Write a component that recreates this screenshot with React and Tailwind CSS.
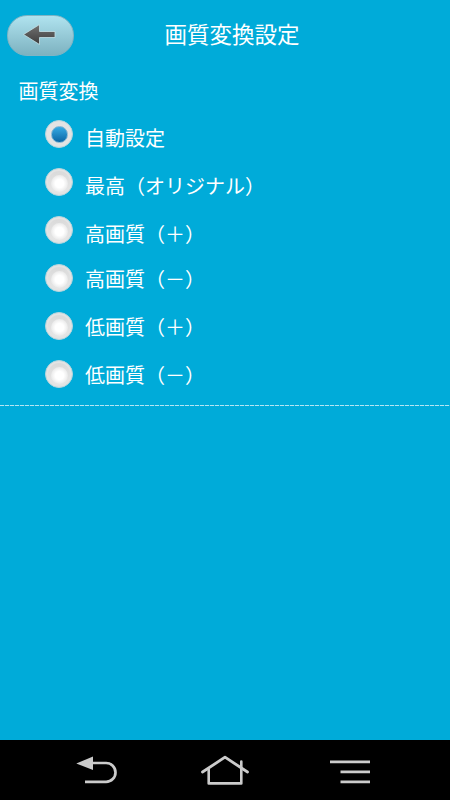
import React, { useState } from "react";

const OPTIONS = [
  { id: "auto", label: "自動設定", shift: "pt-[7px]" },
  { id: "best", label: "最高（オリジナル）", shift: "pt-[7px]" },
  { id: "high-plus", label: "高画質（＋）", shift: "pt-[7px]" },
  { id: "high-minus", label: "高画質（－）", shift: "pt-px" },
  { id: "low-plus", label: "低画質（＋）", shift: "pt-px" },
  { id: "low-minus", label: "低画質（－）", shift: "pt-px" },
];

function BackButton() {
  return (
    <button
      type="button"
      aria-label="戻る"
      className="flex h-[41px] w-[67px] items-center justify-center rounded-[20px] border border-[#7fb4c4] bg-linear-to-b from-[#b0e3ef] to-[#7db2c0]"
    >
      <svg width="36" height="24" viewBox="0 0 36 24" className="-mt-[3px]">
        <defs>
          <linearGradient id="arrow" x1="0" y1="0" x2="0" y2="1">
            <stop offset="0" stopColor="#727272" />
            <stop offset="1" stopColor="#3c3c3c" />
          </linearGradient>
        </defs>
        <path
          d="M0.500 12.500L16.500 2.500v7H32v6H16.500v7z"
          fill="url(#arrow)"
          stroke="#c4e2e9"
          strokeWidth="0.8"
        />
      </svg>
    </button>
  );
}

function Radio({ checked }) {
  return (
    <span className="flex size-7 shrink-0 items-center justify-center rounded-full border border-[#b5d5dd] bg-[#e3e3e3]">
      {checked ? (
        <span className="size-[17px] rounded-full border border-[#7fb3d3] bg-linear-to-b from-[#35abe4] to-[#0a67a6]" />
      ) : (
        <span className="flex size-[22px] items-center justify-center rounded-full bg-linear-to-b from-[#dadada] to-[#e6e6e6]">
          <span className="mt-0.5 ml-px size-[17px] rounded-full bg-radial from-white from-35% to-[#eaeaea] to-70%" />
        </span>
      )}
    </span>
  );
}

function NavBar() {
  return (
    <nav className="flex h-[60px] bg-black text-[#cbcbcb]">
      <svg width="450" height="60" viewBox="0 0 450 60" fill="none" stroke="currentColor">
        <path d="M76.3 23.4L93 16.5v13.6z" fill="currentColor" stroke="none" />
        <path d="M92 23h14.1a9.4 9.4 0 0 1 0 18.8H85" strokeWidth="2.7" />
        <path d="M202.5 32L225 17.2L247.5 32" strokeWidth="2.8" strokeLinecap="round" strokeLinejoin="round" />
        <path d="M208.7 29.5V43.4H241.3V21.5" strokeWidth="2.6" strokeLinecap="round" strokeLinejoin="round" />
        <path d="M330 21.8h40M340.5 31.8H370M340.5 41.8H370" strokeWidth="2.7" />
      </svg>
    </nav>
  );
}

export default function App() {
  const [selected, setSelected] = useState("auto");

  return (
    <div className="flex h-[800px] w-[450px] flex-col overflow-hidden bg-[#00abd9] font-['Noto_Sans_CJK_JP',sans-serif] text-white">
      <header className="grid h-[70px] grid-cols-[67px_1fr_67px] items-center px-[7px]">
        <BackButton />
        <h1 className="pb-[3px] pl-[14px] text-center text-[22.5px] leading-none whitespace-nowrap">画質変換設定</h1>
      </header>

      <main className="flex-1">
        <section>
          <h2 className="flex h-10 items-center pt-0.5 pl-[18.5px] text-xl leading-none">画質変換</h2>
          <ul role="radiogroup">
            {OPTIONS.map((option) => (
              <li key={option.id}>
                <button
                  type="button"
                  role="radio"
                  aria-checked={selected === option.id}
                  onClick={() => setSelected(option.id)}
                  className="flex h-12 w-full items-center gap-3 pl-[45px] text-left"
                >
                  <Radio checked={selected === option.id} />
                  <span className={`text-xl leading-none ${option.shift}`}>{option.label}</span>
                </button>
              </li>
            ))}
          </ul>
        </section>
        <div className="mt-[7px] h-px bg-[repeating-linear-gradient(to_right,#b4e5f3_0_4px,#1cb4dc_4px_5px)]" />
      </main>

      <NavBar />
    </div>
  );
}
